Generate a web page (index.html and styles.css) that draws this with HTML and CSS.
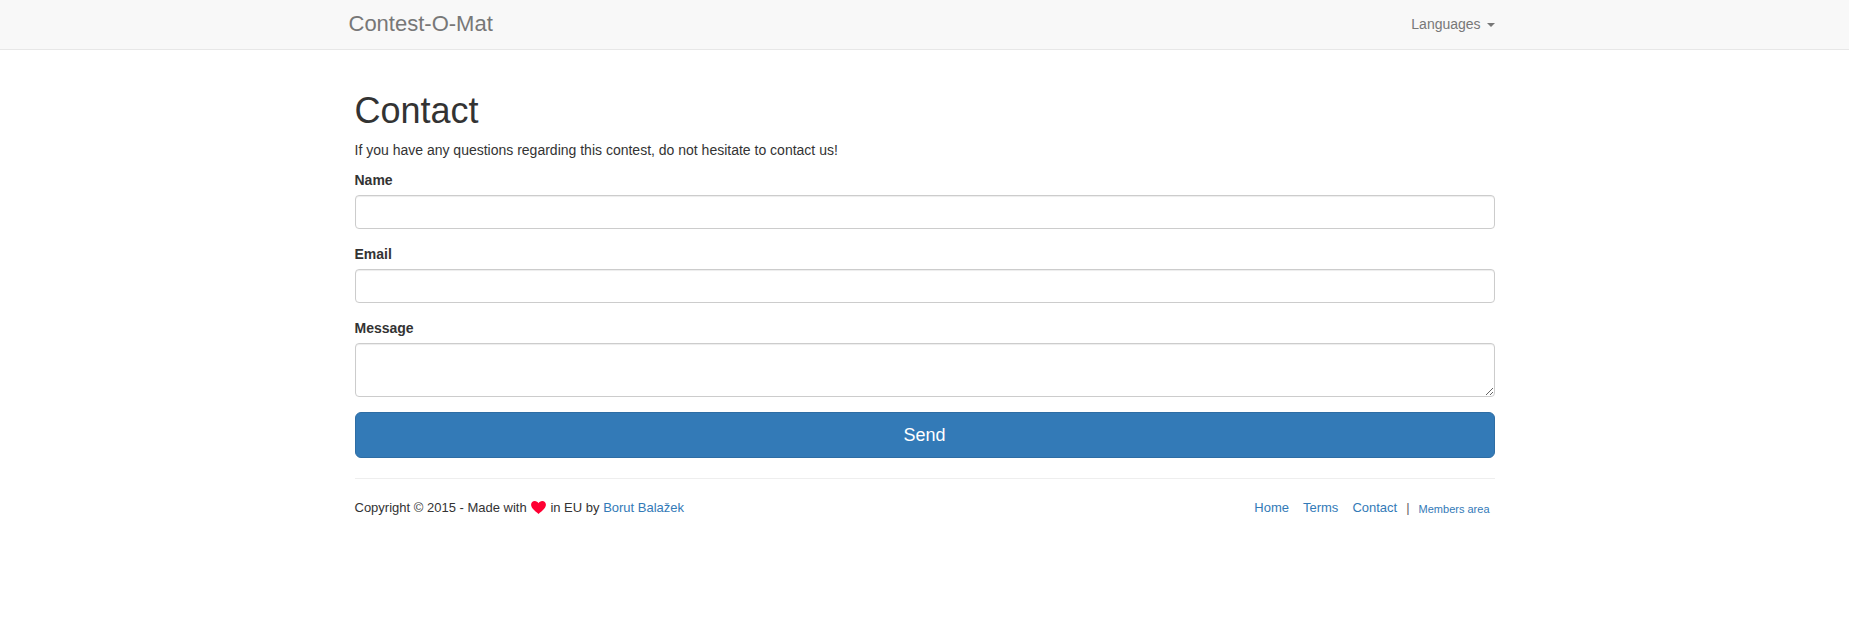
FILE: index.html
```html
<!DOCTYPE html>
<html lang="en">
<head>
<meta charset="utf-8">
<title>Contact</title>
<link rel="stylesheet" href="styles.css">
</head>
<body>
<nav class="navbar">
  <div class="navbar-inner">
    <a class="brand" href="#">Contest-O-Mat</a>
    <a class="lang" href="#">Languages <span class="caret"></span></a>
  </div>
</nav>
<main class="container">
  <h1>Contact</h1>
  <p class="intro">If you have any questions regarding this contest, do not hesitate to contact us!</p>
  <form>
    <div class="group"><label for="n">Name</label><input id="n" class="control" type="text"></div>
    <div class="group"><label for="e">Email</label><input id="e" class="control" type="text"></div>
    <div class="group"><label for="m">Message</label><textarea id="m" class="control" rows="2"></textarea></div>
    <button class="send" type="button">Send</button>
  </form>
  <hr>
  <footer class="footer">
    <div class="copy">Copyright © 2015 - Made with <svg class="heart" viewBox="0 0 16 14" width="15" height="13"><path d="M8 14C6 12 0 8.200 0 4.100 0 1.700 1.800 0 4 0c1.700 0 3.200 1 4 2.400C8.800 1 10.300 0 12 0c2.200 0 4 1.700 4 4.100C16 8.200 10 12 8 14z"/></svg> in EU by <a href="#">Borut Balažek</a></div>
    <div class="links"><a href="#">Home</a><a href="#">Terms</a><a href="#">Contact</a><span class="sep">|</span><a class="small" href="#">Members area</a></div>
  </footer>
</main>
</body>
</html>
```
FILE: styles.css
```css
* { box-sizing: border-box; }
body { margin: 0; font-family: "Liberation Sans", Arial, sans-serif; font-size: 14px; line-height: 20px; color: #333; background: #fff; }
a { color: #337ab7; text-decoration: none; }
.navbar { height: 50px; background: #f8f8f8; border-bottom: 1px solid #e7e7e7; }
.navbar-inner { width: 1170px; height: 47px; margin: 0 auto; padding: 0 15px 0 9px; display: flex; justify-content: space-between; align-items: center; }
.brand { font-size: 22px; color: #777; }
.lang { color: #777; }
.caret { display: inline-block; width: 0; height: 0; margin-left: 2px; vertical-align: middle; border-top: 4px solid #777; border-left: 4px solid transparent; border-right: 4px solid transparent; }
.container { width: 1170px; margin: 0 auto; padding: 40px 15px 0; }
h1 { margin: 0 0 9px; padding-top: 1px; font-size: 36px; font-weight: 500; line-height: 39.6px; }
.intro { margin: 0 0 10px; }
.group { margin-bottom: 15px; }
label { display: block; margin-bottom: 5px; font-weight: 700; }
.control { display: block; width: 100%; height: 34px; padding: 6px 12px; font: inherit; color: #555; background: #fff; border: 1px solid #ccc; border-radius: 4px; box-shadow: inset 0 1px 1px rgba(0,0,0,.075); }
textarea.control { height: auto; }
.send { display: block; width: 100%; padding: 10px 16px; font: 18px/24px "Liberation Sans", Arial, sans-serif; height: 46px; color: #fff; background: #337ab7; border: 1px solid #2e6da4; border-radius: 6px; }
hr { margin: 20px 0 19px; border: 0; border-top: 1px solid #eee; }
.footer { display: flex; justify-content: space-between; align-items: center; font-size: 13px; }
.heart { margin: 0 0.5px 0 1px; vertical-align: -2px; fill: #f03; }
.links { display: flex; align-items: center; gap: 14px; padding-right: 5px; }
.sep { margin: 0 -5px; color: #666; }
.small { font-size: 11px; position: relative; top: 1px; }
```
